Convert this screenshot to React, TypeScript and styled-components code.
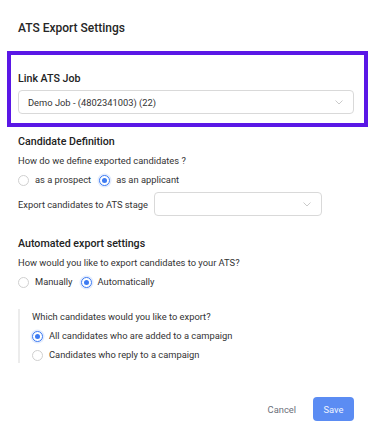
import React from "react";
import styled, { createGlobalStyle } from "styled-components";

const Global = createGlobalStyle`
  html, body { margin: 0; padding: 0; background: #fff; }
  body { font-family: Roboto, "Noto Sans", "Liberation Sans", sans-serif; color: #333; }
  * { box-sizing: border-box; }
`;

const Page = styled.div`
  width: 375px;
  height: 434px;
  padding: 17px 21px 0 18px;
  display: flex;
  flex-direction: column;
`;

const Title = styled.div`
  font-size: 12px;
  line-height: 16px;
  font-weight: 500;
  color: #262626;
  margin-top: 3px;
  margin-bottom: 15px;
`;

const Highlight = styled.div`
  margin: 0 -14px 0 -11px;
  border: 4px solid #5a17e6;
  padding: 16px 10px 9px 7px;
  display: flex;
  flex-direction: column;
`;

const SectionTitle = styled.div<{ $mt?: number }>`
  font-size: 10.67px;
  line-height: 16px;
  font-weight: 500;
  color: #222;
  margin-top: ${(p) => p.$mt ?? 0}px;
`;

const Text = styled.div`
  font-size: 9.33px;
  line-height: 16px;
  color: #333;
  margin-top: 3px;
`;

const Select = styled.div<{ $w?: number; $mt?: number }>`
  height: 24px;
  width: ${(p) => (p.$w ? `${p.$w}px` : "100%")};
  margin-top: ${(p) => p.$mt ?? 0}px;
  border: 1px solid #d9d9d9;
  border-radius: 4px;
  display: flex;
  align-items: center;
  justify-content: space-between;
  padding: 0 10px 0 9px;
  font-size: 9.33px;
  color: #333;
  background: #fff;
`;

const Chevron = () => (
  <svg width="8" height="5" viewBox="0 0 8 5" fill="none">
    <path d="M0.5 0.5l3.5 3.5L7.5 0.5" stroke="#c4c4c4" strokeWidth="0.9" />
  </svg>
);

const RadioRow = styled.div<{ $gap?: number }>`
  display: flex;
  align-items: center;
  gap: ${(p) => p.$gap ?? 8}px;
  margin-top: 3px;
  height: 16px;
`;

const RadioItem = styled.label`
  display: flex;
  align-items: center;
  gap: 6px;
  font-size: 9.33px;
  color: #333;
  line-height: 16px;
`;

const Circle = styled.span<{ $on?: boolean }>`
  width: 11px;
  height: 11px;
  border-radius: 50%;
  border: 1px solid ${(p) => (p.$on ? "#3d7bf2" : "#d0d0d0")};
  box-shadow: ${(p) => (p.$on ? "0 0 0 1.5px rgba(61,123,242,0.15)" : "none")};
  display: inline-flex;
  align-items: center;
  justify-content: center;
  background: #fff;
  &::after {
    content: "";
    width: 5px;
    height: 5px;
    border-radius: 50%;
    background: #3d7bf2;
    display: ${(p) => (p.$on ? "block" : "none")};
  }
`;

const Radio = ({ on, label }: { on?: boolean; label: string }) => (
  <RadioItem>
    <Circle $on={on} />
    {label}
  </RadioItem>
);

const StageRow = styled.div`
  display: flex;
  align-items: center;
  gap: 6px;
  margin-top: 4px;
  font-size: 9.33px;
  color: #333;
`;

const Nested = styled.div`
  margin: 19px 0 0 0;
  border-left: 2px solid #ececec;
  padding-left: 12px;
  display: flex;
  flex-direction: column;
  & > :first-child { margin-top: 0; }
`;

const Footer = styled.div`
  display: flex;
  justify-content: flex-end;
  align-items: center;
  gap: 17px;
  margin-top: 34px;
`;

const Cancel = styled.button`
  border: none;
  background: none;
  padding: 0;
  font-family: inherit;
  font-size: 9.33px;
  color: #6b6f7a;
`;

const Save = styled.button`
  border: none;
  width: 41px;
  height: 24px;
  border-radius: 4px;
  background: #5b8cf3;
  color: #eef3ff;
  font-family: inherit;
  font-size: 9.33px;
`;

export default function App() {
  return (
    <>
      <Global />
      <Page>
        <Title>ATS Export Settings</Title>
        <Highlight>
          <SectionTitle>Link ATS Job</SectionTitle>
          <Select $mt={3}>
            <span>Demo Job - (4802341003) (22)</span>
            <Chevron />
          </Select>
        </Highlight>
        <SectionTitle $mt={7}>Candidate Definition</SectionTitle>
        <Text>How do we define exported candidates ?</Text>
        <RadioRow>
          <Radio label="as a prospect" />
          <Radio on label="as an applicant" />
        </RadioRow>
        <StageRow>
          <span>Export candidates to ATS stage</span>
          <Select $w={168}>
            <span />
            <Chevron />
          </Select>
        </StageRow>
        <SectionTitle $mt={20}>Automated export settings</SectionTitle>
        <Text>How would you like to export candidates to your ATS?</Text>
        <RadioRow>
          <Radio label="Manually" />
          <Radio on label="Automatically" />
        </RadioRow>
        <Nested>
          <Text>Which candidates would you like to export?</Text>
          <RadioRow>
            <Radio on label="All candidates who are added to a campaign" />
          </RadioRow>
          <RadioRow>
            <Radio label="Candidates who reply to a campaign" />
          </RadioRow>
        </Nested>
        <Footer>
          <Cancel>Cancel</Cancel>
          <Save>Save</Save>
        </Footer>
      </Page>
    </>
  );
}
